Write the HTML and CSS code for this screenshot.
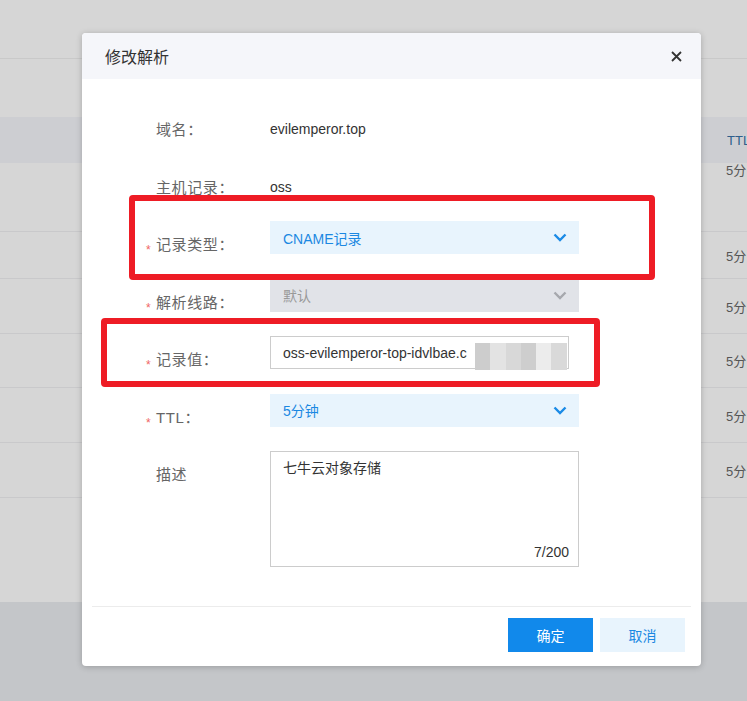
FILE: index.html
```html
<!DOCTYPE html>
<html lang="zh">
<head>
<meta charset="utf-8">
<title>修改解析</title>
<link rel="stylesheet" href="styles.css">
</head>
<body>
<div class="page">
  <div class="page-top"></div>
  <div class="page-gap"></div>
  <div class="table-head"><span class="th-ttl">TTL</span></div>
  <div class="table-body">
    <div class="trow trow-first"><span class="td-ttl">5分</span></div>
    <div class="trow"><span class="td-ttl">5分</span></div>
    <div class="trow"><span class="td-ttl">5分</span></div>
    <div class="trow"><span class="td-ttl">5分</span></div>
    <div class="trow"><span class="td-ttl">5分</span></div>
    <div class="trow"><span class="td-ttl">5分</span></div>
  </div>
  <div class="page-fill"></div>
  <div class="page-bottom"></div>
</div>

<div class="modal">
  <div class="modal-header">
    <span class="modal-title">修改解析</span>
    <svg class="modal-close" width="11" height="11" viewBox="0 0 11 11"><path d="M1 1L10 10M10 1L1 10" stroke="#333" stroke-width="1.8" fill="none"/></svg>
  </div>
  <div class="modal-body">
    <div class="form-row">
      <div class="form-label"><span class="req-spacer"></span>域名：</div>
      <div class="form-text">evilemperor.top</div>
    </div>
    <div class="form-row">
      <div class="form-label"><span class="req-spacer"></span>主机记录：</div>
      <div class="form-text">oss</div>
    </div>
    <div class="form-row">
      <div class="form-label"><span class="req">*</span>记录类型：</div>
      <div class="select select-active">
        <span>CNAME记录</span>
        <svg width="14" height="9" viewBox="0 0 14 9"><path d="M1.5 1.5L7 7L12.5 1.5" stroke="#1a8ae6" stroke-width="2.4" fill="none"/></svg>
      </div>
    </div>
    <div class="form-row">
      <div class="form-label"><span class="req">*</span>解析线路：</div>
      <div class="select select-disabled">
        <span>默认</span>
        <svg width="14" height="9" viewBox="0 0 14 9"><path d="M1.5 1.5L7 7L12.5 1.5" stroke="#a6a8ad" stroke-width="2.4" fill="none"/></svg>
      </div>
    </div>
    <div class="form-row">
      <div class="form-label"><span class="req">*</span>记录值：</div>
      <div class="input">
        <span class="input-text">oss-evilemperor-top-idvlbae.c</span>
        <span class="mosaic">
          <i class="m1"></i><i class="m2"></i><i class="m3"></i><i class="m4"></i><i class="m5"></i><i class="m6"></i>
        </span>
      </div>
    </div>
    <div class="form-row">
      <div class="form-label"><span class="req">*</span>TTL：</div>
      <div class="select select-active">
        <span>5分钟</span>
        <svg width="14" height="9" viewBox="0 0 14 9"><path d="M1.5 1.5L7 7L12.5 1.5" stroke="#1a8ae6" stroke-width="2.4" fill="none"/></svg>
      </div>
    </div>
    <div class="form-row form-row-tall">
      <div class="form-label"><span class="req-spacer"></span>描述</div>
      <div class="textarea">
        <div class="textarea-text">七牛云对象存储</div>
        <div class="textarea-count">7/200</div>
      </div>
    </div>
  </div>
  <div class="modal-divider"></div>
  <div class="modal-footer">
    <button class="btn btn-primary">确定</button>
    <button class="btn btn-light">取消</button>
  </div>
</div>

<div class="annot annot-1"></div>
<div class="annot annot-2"></div>
</body>
</html>
```

FILE: styles.css
```css
* { box-sizing: border-box; }
html, body { margin: 0; padding: 0; }
body {
  width: 747px;
  height: 701px;
  overflow: hidden;
  position: relative;
  background: #d6d6d6;
  font-family: "Liberation Sans", "Noto Sans CJK SC", sans-serif;
  font-size: 14px;
}

/* dimmed background page */
.page {
  display: flex;
  flex-direction: column;
  height: 701px;
}
.page-top { height: 59px; border-bottom: 1px solid #c9c9c9; }
.page-gap { height: 58px; }
.table-head {
  height: 46px;
  background: #cdced2;
  display: flex;
  align-items: center;
  justify-content: flex-end;
}
.th-ttl { color: #2f5f8c; font-size: 13px; width: 20px; overflow: hidden; white-space: nowrap; }
.table-body {
  display: grid;
  grid-template-rows: 69px 47px 55px 54px 55px 55px;
}
.trow {
  border-bottom: 1px solid #c9c9cb;
  display: flex;
  align-items: center;
  justify-content: flex-end;
}
.trow-first { align-items: flex-start; }
.trow-first .td-ttl { margin-top: -3px; }
.td-ttl { color: #555; font-size: 13px; width: 21px; overflow: hidden; white-space: nowrap; }
.page-fill { flex: 1; }
.page-bottom { height: 99px; background: #c4c6c9; }

/* modal */
.modal {
  position: absolute;
  left: 82px;
  top: 33px;
  width: 619px;
  height: 633px;
  background: #fff;
  border-radius: 4px;
  box-shadow: 0 1px 6px rgba(0, 0, 0, 0.22);
  display: flex;
  flex-direction: column;
  overflow: hidden;
}
.modal-header {
  height: 46px;
  background: #f5f6fa;
  display: flex;
  align-items: center;
  justify-content: space-between;
  padding: 0 19px 0 23px;
}
.modal-title { font-size: 16px; color: #333; }
.modal-close { display: block; }

.modal-body {
  padding: 27px 0 0 64px;
  display: flex;
  flex-direction: column;
  gap: 24.5px;
}
.form-row {
  display: flex;
  align-items: flex-start;
  height: 33px;
}
.form-row-tall { height: 116px; }
.form-label {
  width: 124px;
  padding-top: 14px;
  line-height: 20px;
  color: #666;
  font-size: 15px;
  letter-spacing: 0.6px;
  display: flex;
  align-items: center;
  white-space: nowrap;
}
.req, .req-spacer {
  display: inline-block;
  width: 10px;
  flex: none;
  color: #f06565;
  font-size: 12px;
  line-height: 12px;
  position: relative;
  top: 5px;
  letter-spacing: 0;
}
.form-text {
  padding-top: 13px;
  line-height: 20px;
  color: #333;
}
.select {
  width: 309px;
  height: 33px;
  display: flex;
  align-items: center;
  justify-content: space-between;
  padding: 0 12px 0 13px;
}
.select-active { background: #e8f4fd; color: #1b88e2; }
.select-disabled { background: #e1e3e8; color: #999; }
.select svg { display: block; }

.input {
  width: 299px;
  height: 33px;
  border: 1px solid #cccccc;
  position: relative;
  display: flex;
  align-items: center;
  padding-left: 12px;
  color: #333;
  white-space: nowrap;
}
.mosaic {
  position: absolute;
  left: 204px;
  top: 6px;
  height: 27px;
  display: flex;
}
.mosaic i { display: block; width: 15.3px; height: 27px; }
.m1 { background: #cdcdcd; }
.m2 { background: #e3e3e3; }
.m3 { background: #d8d8d8; }
.m4 { background: #cecece; }
.m5 { background: #ececec; }
.m6 { background: #d9d9d9; }

.textarea {
  width: 309px;
  height: 116px;
  border: 1px solid #cccccc;
  display: flex;
  flex-direction: column;
  justify-content: space-between;
  padding: 6px 9px 4px 12px;
  color: #333;
}
.textarea-text { line-height: 20px; }
.textarea-count { line-height: 20px; text-align: right; }

.modal-divider {
  margin: 39px 10px 0 10px;
  height: 1px;
  background: #ececec;
}
.modal-footer {
  display: flex;
  justify-content: flex-end;
  gap: 7px;
  padding: 11px 16px 0 0;
}
.btn {
  width: 85px;
  height: 34px;
  border: none;
  font-family: "Liberation Sans", "Noto Sans CJK SC", sans-serif;
  font-size: 14px;
  padding: 0;
}
.btn-primary { background: #1189eb; color: #fff; }
.btn-light { background: #e8f4fd; color: #1b88e2; }

/* red annotation boxes */
.annot {
  position: absolute;
  border: 6px solid #ee1c25;
  border-radius: 4px;
}
.annot-1 { left: 129px; top: 195px; width: 526px; height: 85px; }
.annot-2 { left: 101px; top: 318px; width: 499px; height: 69px; }
```
